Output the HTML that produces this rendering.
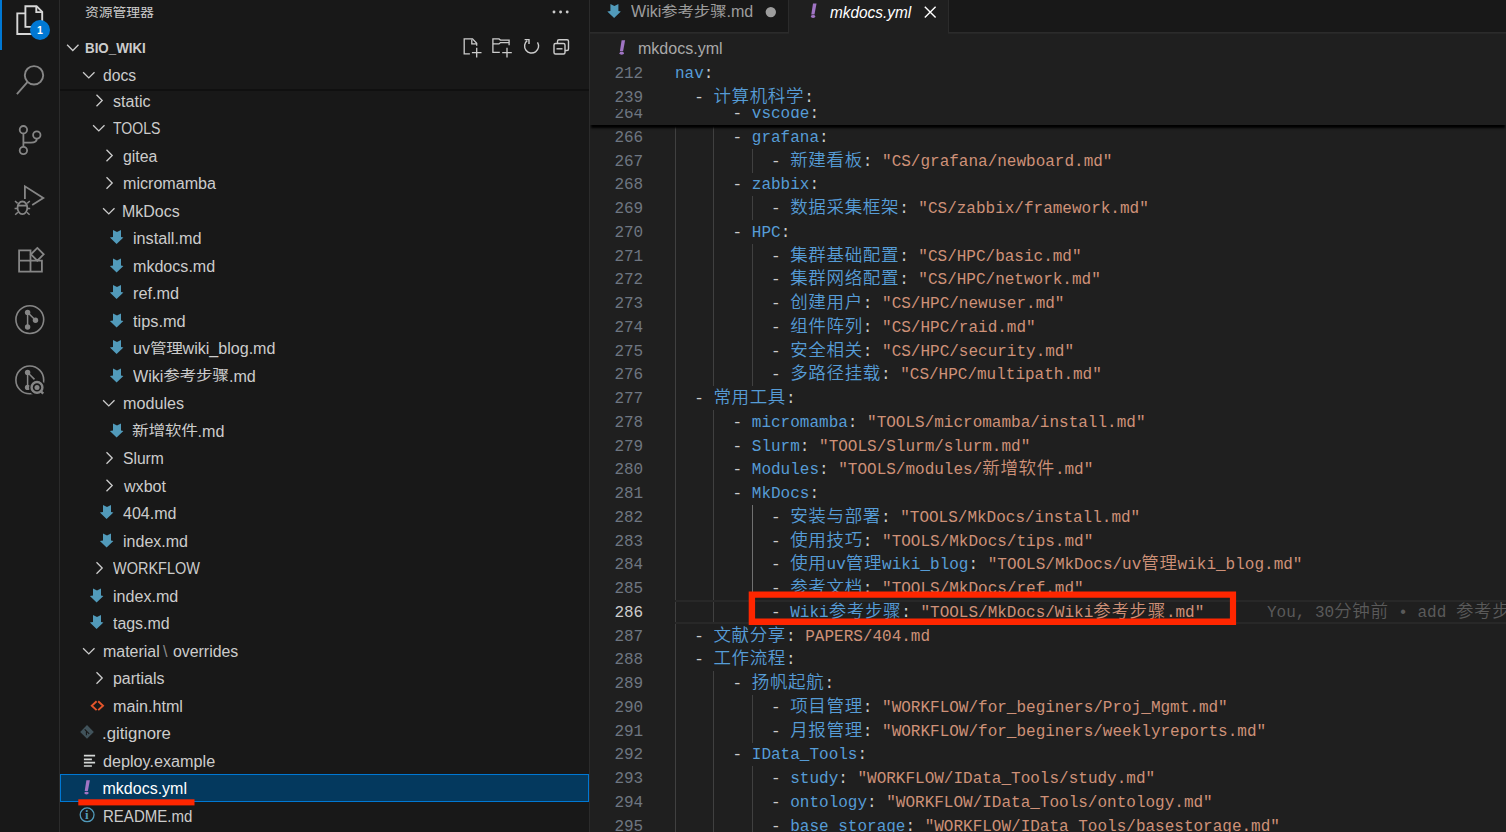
<!DOCTYPE html><html lang="zh-CN"><head><meta charset="utf-8"><title>mkdocs.yml - BIO_WIKI</title><style>
*{box-sizing:border-box}
html,body{margin:0;padding:0;background:#1f1f1f}
body{width:1506px;height:832px;overflow:hidden;position:relative;font-family:"Liberation Sans","Noto Sans CJK SC",sans-serif;color:#ccc;-webkit-font-smoothing:antialiased}
#act{position:absolute;left:0;top:0;width:61px;height:832px;background:#181818}
#actb{position:absolute;left:59px;top:0;width:1px;height:832px;background:#2b2b2b}
#side{position:absolute;left:61px;top:0;width:528px;height:832px;background:#181818}
#sideb{position:absolute;left:589px;top:0;width:1px;height:832px;background:#2b2b2b}
#ed{position:absolute;left:590px;top:0;width:916px;height:832px;background:#1f1f1f;overflow:hidden}
.abs{position:absolute}
.row{position:absolute;left:0;width:528px;height:27.5px;line-height:27.5px;font-size:16px;white-space:pre}
.row .t{position:absolute;top:1.4px;color:#ccc;transform-origin:0 50%;display:block}
.selbg{position:absolute;left:-1px;width:529px;height:27.5px;background:#04395e;outline:1px solid #0078d4;outline-offset:-1px}
.row.sel .t{color:#fff}
.c{font-family:"Liberation Sans","Noto Sans CJK SC",sans-serif;display:inline-block;position:relative;transform-origin:0 50%;line-height:1}
svg{position:absolute;overflow:visible}
.ln{position:absolute;left:0;width:916px;height:23.75px;line-height:23.75px;font-family:"Liberation Mono","Noto Sans CJK SC",monospace;font-size:16px;white-space:pre;color:#ccc}
.ln .n{position:absolute;left:0;top:1.8px;width:53.2px;text-align:right;color:#6e7681}
.ln .x{position:absolute;left:85px;top:1.8px}
.k{color:#569cd6} .s{color:#ce9178}
.z{font-family:"Liberation Mono","Noto Sans CJK SC",monospace;font-size:17.5px;letter-spacing:0.65px;line-height:0;font-weight:350}
.g{position:absolute;width:1px;background:#404040}
</style></head><body>
<div id="act">
<div class="abs" style="left:0;top:0;width:2px;height:50px;background:#0078d4"></div>
<svg width="60" height="832" viewBox="0 0 60 832" style="left:0;top:0" fill="none" stroke-linejoin="miter">
<g stroke="#d7d7d7" stroke-width="1.9"><path d="M25.4 26.9V6.2H36.6L42.2 11.8V26.9H25.4Z"/><path d="M36.3 6.4V12.1H42"/><path d="M25.4 13.4H17.3V34H32.2V27"/></g>
<g stroke="#868686" stroke-width="1.9"><circle cx="34" cy="75.3" r="9.2"/><path d="M27.4 82.2L16.9 94.2"/></g>
<g stroke="#868686" stroke-width="1.8"><circle cx="23.4" cy="129.7" r="3.7"/><circle cx="23.4" cy="150.5" r="3.7"/><circle cx="36.8" cy="135" r="3.7"/><path d="M23.4 133.4V146.8"/><path d="M36.8 138.7C36.8 142.3 34 142.6 31 142.6H23.4"/></g>
<g stroke="#868686" stroke-width="1.8"><path d="M24.9 199V186.3L43.3 197.9L32.2 204.9"/><ellipse cx="22.4" cy="207.8" rx="4.9" ry="6.3"/><path d="M17.6 205.6H27.2"/><path d="M17.6 203.4L15 201M27.2 203.4L29.8 201M17.3 208.5H14.6M27.5 208.5H30.2M17.9 212.2L15.2 214.8M26.9 212.2L29.6 214.8" stroke-width="1.5"/></g>
<g stroke="#868686" stroke-width="1.8"><path d="M19.1 250.3H30.5V260.6H41.9V271.6H19.1Z"/><path d="M19.1 260.6H30.5V271.6"/><path d="M37.3 247.9L43.7 254.3L37.3 260.7L30.9 254.3Z"/></g>
<g stroke="#868686" stroke-width="1.6"><circle cx="29.8" cy="319.6" r="13.9"/><path d="M27.6 312.4V327M27.6 312.4L35.5 320.3" stroke-width="1.5"/></g><g fill="#868686"><circle cx="27.6" cy="312.4" r="2.7"/><circle cx="27.6" cy="327" r="2.7"/><circle cx="35.5" cy="320.3" r="2.7"/></g>
<g stroke="#868686" stroke-width="1.6"><circle cx="29.8" cy="379.9" r="13.9"/><path d="M27.6 372.5V387.4M27.6 372.5L34.5 379.4" stroke-width="1.5"/></g><g fill="#868686"><circle cx="27.6" cy="372.5" r="2.7"/><circle cx="27.6" cy="387.4" r="2.7"/></g><circle cx="37.2" cy="387.6" r="8.2" fill="#181818"/><g stroke="#868686"><circle cx="37" cy="387.4" r="5.4" stroke-width="2.4"/><path d="M41 391.4L43.2 393.6" stroke-width="2.4"/></g><circle cx="37" cy="387.4" r="2.5" fill="#868686"/>
</svg>
<div class="abs" style="left:29.9px;top:19.8px;width:20px;height:20px;border-radius:10px;background:#0078d4;color:#fff;font-weight:bold;font-size:10.5px;line-height:20px;text-align:center">1</div>
</div><div id="actb"></div>
<div id="side">
<div class="abs" style="left:24px;top:1.2px;font-size:13.75px;line-height:24px;color:#ccc;white-space:pre"><span class="c" style="font-size:12.4px;letter-spacing:-0.12px;margin-right:7.37px;transform:scaleX(1.12);top:0px">资源管理器</span></div>
<svg width="20" height="6" viewBox="0 0 20 6" style="left:490px;top:9px" fill="#ccc"><circle cx="3" cy="3" r="1.45"/><circle cx="9.6" cy="3" r="1.45"/><circle cx="16.2" cy="3" r="1.45"/></svg>
<div class="row" style="top:33.5px"><svg width="528" height="28" style="left:0;top:0"><path d="M6.1 10.8L11.8 16.5L17.5 10.8" stroke="#ccc" stroke-width="1.3" fill="none"/></svg><span class="t" style="left:24.14px;transform:scaleX(0.9710);font-weight:bold;font-size:13.75px;top:1px">BIO_WIKI</span></div>
<svg width="528" height="70" viewBox="61 0 528 70" style="left:0;top:0" fill="none" stroke="#ccc" stroke-width="1.4"><g stroke-width="1.3"><path d="M469.9 53.9H464.2V38.9H472.5L476.7 43.2V45.8"/><path d="M471.8 39.4V43.9H476.2"/><path d="M476.7 47.8V57.4M471.9 52.6H481.5"/><path d="M499.8 52.3H492.9V38.9H499L500.4 40.1H509.1V45.2"/><path d="M492.9 43.9H499L500.4 42.6H509.1"/><path d="M507 47.8V57.4M502.2 52.6H511.8"/></g><path d="M537.5 42.3A7 7 0 1 1 527.2 40.6"/><path d="M524.6 39.6H529V44"/><rect x="554" y="43.5" width="11" height="10.5" rx="1.5"/><path d="M557.5 43.5V41.3Q557.5 39.8 559 39.8H567Q568.5 39.8 568.5 41.3V49Q568.5 50.5 567 50.5H565"/><path d="M556.5 48.8H562.5"/></svg>
<div class="selbg" style="top:774.00px"></div>
<div class="row" style="top:86.50px"><svg width="528" height="28" style="left:0;top:0"><path d="M35.5 7.8L41.2 13.5L35.5 19.2" stroke="#ccc" stroke-width="1.3" fill="none"/></svg><span class="t" style="left:51.92px;transform:scaleX(1.0051);">static</span></div>
<div class="row" style="top:114.00px"><svg width="528" height="28" style="left:0;top:0"><path d="M32.1 11.2L37.8 16.9L43.5 11.2" stroke="#ccc" stroke-width="1.3" fill="none"/></svg><span class="t" style="left:52.20px;transform:scaleX(0.8801);">TOOLS</span></div>
<div class="row" style="top:141.50px"><svg width="528" height="28" style="left:0;top:0"><path d="M45.5 7.8L51.2 13.5L45.5 19.2" stroke="#ccc" stroke-width="1.3" fill="none"/></svg><span class="t" style="left:61.64px;transform:scaleX(0.9896);">gitea</span></div>
<div class="row" style="top:169.00px"><svg width="528" height="28" style="left:0;top:0"><path d="M45.5 8.3L51.2 14.0L45.5 19.7" stroke="#ccc" stroke-width="1.3" fill="none"/></svg><span class="t" style="left:62.06px;transform:scaleX(1.0059);">micromamba</span></div>
<div class="row" style="top:196.50px"><svg width="528" height="28" style="left:0;top:0"><path d="M42.1 11.2L47.8 16.9L53.5 11.2" stroke="#ccc" stroke-width="1.3" fill="none"/></svg><span class="t" style="left:61.22px;transform:scaleX(0.9970);">MkDocs</span></div>
<div class="row" style="top:224.00px"><svg width="528" height="28" style="left:0;top:0"><polygon points="52.0,6.0 56.0,8.0 60.0,6.0 60.0,13.1 62.4,13.5 55.6,19.9 48.9,13.5 52.0,13.1" fill="#519aba"/></svg><span class="t" style="left:71.50px;transform:scaleX(1.0134);">install.md</span></div>
<div class="row" style="top:251.50px"><svg width="528" height="28" style="left:0;top:0"><polygon points="52.0,6.5 56.0,8.5 60.0,6.5 60.0,13.6 62.4,14.0 55.6,20.4 48.9,14.0 52.0,13.6" fill="#519aba"/></svg><span class="t" style="left:71.50px;transform:scaleX(1.0046);">mkdocs.md</span></div>
<div class="row" style="top:279.00px"><svg width="528" height="28" style="left:0;top:0"><polygon points="52.0,6.0 56.0,8.0 60.0,6.0 60.0,13.1 62.4,13.5 55.6,19.9 48.9,13.5 52.0,13.1" fill="#519aba"/></svg><span class="t" style="left:71.50px;transform:scaleX(1.0161);">ref.md</span></div>
<div class="row" style="top:306.50px"><svg width="528" height="28" style="left:0;top:0"><polygon points="52.0,6.5 56.0,8.5 60.0,6.5 60.0,13.6 62.4,14.0 55.6,20.4 48.9,14.0 52.0,13.6" fill="#519aba"/></svg><span class="t" style="left:72.20px;transform:scaleX(1.0209);">tips.md</span></div>
<div class="row" style="top:334.00px"><svg width="528" height="28" style="left:0;top:0"><polygon points="52.0,6.0 56.0,8.0 60.0,6.0 60.0,13.1 62.4,13.5 55.6,19.9 48.9,13.5 52.0,13.1" fill="#519aba"/></svg><span class="t" style="left:71.50px;transform:scaleX(1.0039);">uv<span class="c" style="font-size:13.8px;letter-spacing:-0.26px;margin-right:5.42px;transform:scaleX(1.2);top:-1.5px">管理</span>wiki_blog.md</span></div>
<div class="row" style="top:361.50px"><svg width="528" height="28" style="left:0;top:0"><polygon points="52.0,6.5 56.0,8.5 60.0,6.5 60.0,13.6 62.4,14.0 55.6,20.4 48.9,14.0 52.0,13.6" fill="#519aba"/></svg><span class="t" style="left:72.20px;transform:scaleX(1.0075);">Wiki<span class="c" style="font-size:13.8px;letter-spacing:-0.26px;margin-right:10.83px;transform:scaleX(1.2);top:-1.5px">参考步骤</span>.md</span></div>
<div class="row" style="top:389.00px"><svg width="528" height="28" style="left:0;top:0"><path d="M42.1 11.2L47.8 16.9L53.5 11.2" stroke="#ccc" stroke-width="1.3" fill="none"/></svg><span class="t" style="left:62.06px;transform:scaleX(1.0090);">modules</span></div>
<div class="row" style="top:416.50px"><svg width="528" height="28" style="left:0;top:0"><polygon points="52.0,6.5 56.0,8.5 60.0,6.5 60.0,13.6 62.4,14.0 55.6,20.4 48.9,14.0 52.0,13.6" fill="#519aba"/></svg><span class="t" style="left:70.80px;transform:scaleX(1.0081);"><span class="c" style="font-size:13.8px;letter-spacing:-0.26px;margin-right:10.83px;transform:scaleX(1.2);top:-1.5px">新增软件</span>.md</span></div>
<div class="row" style="top:444.00px"><svg width="528" height="28" style="left:0;top:0"><path d="M45.5 8.3L51.2 14.0L45.5 19.7" stroke="#ccc" stroke-width="1.3" fill="none"/></svg><span class="t" style="left:61.64px;transform:scaleX(0.9782);">Slurm</span></div>
<div class="row" style="top:471.50px"><svg width="528" height="28" style="left:0;top:0"><path d="M45.5 7.8L51.2 13.5L45.5 19.2" stroke="#ccc" stroke-width="1.3" fill="none"/></svg><span class="t" style="left:63.04px;transform:scaleX(1.0044);">wxbot</span></div>
<div class="row" style="top:499.00px"><svg width="528" height="28" style="left:0;top:0"><polygon points="42.0,6.0 46.0,8.0 50.0,6.0 50.0,13.1 52.4,13.5 45.6,19.9 38.9,13.5 42.0,13.1" fill="#519aba"/></svg><span class="t" style="left:61.64px;transform:scaleX(1.0005);">404.md</span></div>
<div class="row" style="top:526.50px"><svg width="528" height="28" style="left:0;top:0"><polygon points="42.0,6.5 46.0,8.5 50.0,6.5 50.0,13.6 52.4,14.0 45.6,20.4 38.9,14.0 42.0,13.6" fill="#519aba"/></svg><span class="t" style="left:62.06px;transform:scaleX(1.0000);">index.md</span></div>
<div class="row" style="top:554.00px"><svg width="528" height="28" style="left:0;top:0"><path d="M35.5 8.3L41.2 14.0L35.5 19.7" stroke="#ccc" stroke-width="1.3" fill="none"/></svg><span class="t" style="left:51.92px;transform:scaleX(0.9053);">WORKFLOW</span></div>
<div class="row" style="top:581.50px"><svg width="528" height="28" style="left:0;top:0"><polygon points="32.0,6.5 36.0,8.5 40.0,6.5 40.0,13.6 42.4,14.0 35.6,20.4 28.9,14.0 32.0,13.6" fill="#519aba"/></svg><span class="t" style="left:51.78px;transform:scaleX(1.0056);">index.md</span></div>
<div class="row" style="top:609.00px"><svg width="528" height="28" style="left:0;top:0"><polygon points="32.0,6.0 36.0,8.0 40.0,6.0 40.0,13.1 42.4,13.5 35.6,19.9 28.9,13.5 32.0,13.1" fill="#519aba"/></svg><span class="t" style="left:51.92px;transform:scaleX(0.9938);">tags.md</span></div>
<div class="row" style="top:636.50px"><svg width="528" height="28" style="left:0;top:0"><path d="M22.1 11.2L27.8 16.9L33.5 11.2" stroke="#ccc" stroke-width="1.3" fill="none"/></svg><span class="t" style="left:41.92px;transform:scaleX(0.9969);">material</span><span class="t" style="left:102.00px;transform:scaleX(1.0000);color:#8c8c8c">\</span><span class="t" style="left:111.56px;transform:scaleX(0.9919);">overrides</span></div>
<div class="row" style="top:664.00px"><svg width="528" height="28" style="left:0;top:0"><path d="M35.5 8.3L41.2 14.0L35.5 19.7" stroke="#ccc" stroke-width="1.3" fill="none"/></svg><span class="t" style="left:51.50px;transform:scaleX(0.9966);">partials</span></div>
<div class="row" style="top:691.50px"><svg width="528" height="28" style="left:0;top:0"><path d="M35.6 9.3L30.8 13.7L35.6 18.1M37.2 9.3L42.0 13.7L37.2 18.1" stroke="#e4552b" stroke-width="1.9" fill="none"/></svg><span class="t" style="left:51.50px;transform:scaleX(1.0082);">main.html</span></div>
<div class="row" style="top:719.00px"><svg width="528" height="28" style="left:0;top:0"><path d="M26.0 6.1L32.8 12.9L26.0 19.7L19.2 12.9Z" fill="#41535b"/><path d="M23.7 10.3L28.2 14.8M25.4 12.1V16.2" stroke="#181818" stroke-width="1.1" fill="none"/></svg><span class="t" style="left:41.22px;transform:scaleX(1.0473);">.gitignore</span></div>
<div class="row" style="top:746.50px"><svg width="528" height="28" style="left:0;top:0"><path d="M22.9 8.7H34.1M22.9 12.3H30.9M22.9 15.6H34.1M22.9 19H30.9" stroke="#d4d7d6" stroke-width="1.7" fill="none"/></svg><span class="t" style="left:41.92px;transform:scaleX(1.0115);">deploy.example</span></div>
<div class="row sel" style="top:774.00px"><svg width="528" height="28" style="left:0;top:0"><polygon points="25.4,6.2 28.9,6.2 26.9,17.1 23.7,17.1" fill="#a074c4"/><ellipse cx="25.5" cy="19.1" rx="2.2" ry="1.45" fill="#a074c4"/></svg><span class="t" style="left:41.50px;transform:scaleX(1.0000);">mkdocs.yml</span></div>
<div class="row" style="top:801.50px"><svg width="528" height="28" style="left:0;top:0"><circle cx="26.1" cy="12.8" r="6.9" stroke="#519aba" stroke-width="1.3" fill="none"/></svg><span class="t" style="left:23.9px;color:#519aba;font-weight:bold;font-family:'Liberation Serif',serif;font-size:13px;top:-0.3px">i</span><span class="t" style="left:41.78px;transform:scaleX(0.9386);">README.md</span></div>
<div class="abs" style="left:0;top:61px;width:528px;height:27.5px;background:#181818"></div><div class="abs" style="left:-1px;top:89px;width:529px;height:2px;background:#101010"></div>
<div class="row" style="top:60.60px"><svg width="528" height="28" style="left:0;top:0"><path d="M22.1 11.2L27.8 16.9L33.5 11.2" stroke="#ccc" stroke-width="1.3" fill="none"/></svg><span class="t" style="left:41.50px;transform:scaleX(0.9791);">docs</span></div>
<svg width="528" height="832" viewBox="61 0 528 832" style="left:0;top:0"><rect x="78.3" y="799.3" width="116.2" height="6.1" fill="#ff2600"/></svg>
</div><div id="sideb"></div>
<div id="ed">
<div class="abs" style="left:0;top:0;width:916px;height:32px;background:#181818"></div>
<div class="abs" style="left:0;top:32px;width:916px;height:1px;background:#2b2b2b"></div><div class="abs" style="left:0;top:33px;width:916px;height:1px;background:#262626"></div>
<div class="abs" style="left:198px;top:0;width:1px;height:32px;background:#2b2b2b"></div>
<div class="abs" style="left:199px;top:0;width:159px;height:34px;background:#1f1f1f"></div>
<div class="abs" style="left:358px;top:0;width:1px;height:32px;background:#2b2b2b"></div>
<svg width="400" height="60" style="left:0;top:0"><polygon points="20.4,4.0 24.4,6.0 28.4,4.0 28.4,11.1 30.8,11.5 24.1,17.9 17.3,11.5 20.4,11.1" fill="#519aba"/><circle cx="180.8" cy="12.1" r="5.2" fill="#9d9d9d"/><polygon points="223.0,3.6 226.5,3.6 224.5,14.5 221.3,14.5" fill="#a074c4"/><ellipse cx="223.1" cy="16.5" rx="2.2" ry="1.45" fill="#a074c4"/><polygon points="31.6,40.3 35.1,40.3 33.1,51.2 29.9,51.2" fill="#a074c4"/><ellipse cx="31.7" cy="53.2" rx="2.2" ry="1.45" fill="#a074c4"/><path d="M334.8 6.8L345.6 17.6M345.6 6.8L334.8 17.6" stroke="#fff" stroke-width="1.4" fill="none"/></svg>
<div class="abs" style="left:40.70px;top:0px;font-size:16px;line-height:24.6px;white-space:pre;transform-origin:0 50%;transform:scaleX(1.0032);color:#9d9d9d">Wiki<span class="c" style="font-size:13.8px;letter-spacing:-0.26px;margin-right:10.83px;transform:scaleX(1.2);top:-1.5px">参考步骤</span>.md</div>
<div class="abs" style="left:239.72px;top:1px;font-size:16px;line-height:24.6px;white-space:pre;transform-origin:0 50%;transform:scaleX(0.9603);color:#fff;font-style:italic">mkdocs.yml</div>
<div class="abs" style="left:47.84px;top:34.8px;font-size:16px;line-height:27.5px;white-space:pre;transform-origin:0 50%;transform:scaleX(1.0021);color:#a9a9a9">mkdocs.yml</div>
<div class="g" style="left:85px;top:125.00px;height:712.50px"></div>
<div class="g" style="left:123.4px;top:125.00px;height:261.25px"></div>
<div class="g" style="left:123.4px;top:410.00px;height:213.75px"></div>
<div class="g" style="left:123.4px;top:671.25px;height:166.25px"></div>
<div class="g" style="left:161.8px;top:148.75px;height:23.75px"></div>
<div class="g" style="left:161.8px;top:196.25px;height:23.75px"></div>
<div class="g" style="left:161.8px;top:243.75px;height:142.50px"></div>
<div class="g" style="left:161.8px;top:505.00px;height:118.75px;background:#707070"></div>
<div class="g" style="left:161.8px;top:695.00px;height:47.50px"></div>
<div class="g" style="left:161.8px;top:766.25px;height:71.25px"></div>
<div class="abs" style="left:85px;top:600px;width:831px;height:23.75px;border-top:2px solid #282828;border-bottom:2px solid #282828"></div>
<div class="ln" style="top:125.00px"><span class="n">266</span><span class="x">      - <span class="k">grafana</span>:</span></div>
<div class="ln" style="top:148.75px"><span class="n">267</span><span class="x">          - <span class="k"><span class="z">新建看板</span></span>: <span class="s">"CS/grafana/newboard.md"</span></span></div>
<div class="ln" style="top:172.50px"><span class="n">268</span><span class="x">      - <span class="k">zabbix</span>:</span></div>
<div class="ln" style="top:196.25px"><span class="n">269</span><span class="x">          - <span class="k"><span class="z">数据采集框架</span></span>: <span class="s">"CS/zabbix/framework.md"</span></span></div>
<div class="ln" style="top:220.00px"><span class="n">270</span><span class="x">      - <span class="k">HPC</span>:</span></div>
<div class="ln" style="top:243.75px"><span class="n">271</span><span class="x">          - <span class="k"><span class="z">集群基础配置</span></span>: <span class="s">"CS/HPC/basic.md"</span></span></div>
<div class="ln" style="top:267.50px"><span class="n">272</span><span class="x">          - <span class="k"><span class="z">集群网络配置</span></span>: <span class="s">"CS/HPC/network.md"</span></span></div>
<div class="ln" style="top:291.25px"><span class="n">273</span><span class="x">          - <span class="k"><span class="z">创建用户</span></span>: <span class="s">"CS/HPC/newuser.md"</span></span></div>
<div class="ln" style="top:315.00px"><span class="n">274</span><span class="x">          - <span class="k"><span class="z">组件阵列</span></span>: <span class="s">"CS/HPC/raid.md"</span></span></div>
<div class="ln" style="top:338.75px"><span class="n">275</span><span class="x">          - <span class="k"><span class="z">安全相关</span></span>: <span class="s">"CS/HPC/security.md"</span></span></div>
<div class="ln" style="top:362.50px"><span class="n">276</span><span class="x">          - <span class="k"><span class="z">多路径挂载</span></span>: <span class="s">"CS/HPC/multipath.md"</span></span></div>
<div class="ln" style="top:386.25px"><span class="n">277</span><span class="x">  - <span class="k"><span class="z">常用工具</span></span>:</span></div>
<div class="ln" style="top:410.00px"><span class="n">278</span><span class="x">      - <span class="k">micromamba</span>: <span class="s">"TOOLS/micromamba/install.md"</span></span></div>
<div class="ln" style="top:433.75px"><span class="n">279</span><span class="x">      - <span class="k">Slurm</span>: <span class="s">"TOOLS/Slurm/slurm.md"</span></span></div>
<div class="ln" style="top:457.50px"><span class="n">280</span><span class="x">      - <span class="k">Modules</span>: <span class="s">"TOOLS/modules/<span class="z">新增软件</span>.md"</span></span></div>
<div class="ln" style="top:481.25px"><span class="n">281</span><span class="x">      - <span class="k">MkDocs</span>:</span></div>
<div class="ln" style="top:505.00px"><span class="n">282</span><span class="x">          - <span class="k"><span class="z">安装与部署</span></span>: <span class="s">"TOOLS/MkDocs/install.md"</span></span></div>
<div class="ln" style="top:528.75px"><span class="n">283</span><span class="x">          - <span class="k"><span class="z">使用技巧</span></span>: <span class="s">"TOOLS/MkDocs/tips.md"</span></span></div>
<div class="ln" style="top:552.50px"><span class="n">284</span><span class="x">          - <span class="k"><span class="z">使用</span>uv<span class="z">管理</span>wiki_blog</span>: <span class="s">"TOOLS/MkDocs/uv<span class="z">管理</span>wiki_blog.md"</span></span></div>
<div class="ln" style="top:576.25px"><span class="n">285</span><span class="x">          - <span class="k"><span class="z">参考文档</span></span>: <span class="s">"TOOLS/MkDocs/ref.md"</span></span></div>
<div class="ln" style="top:600.00px"><span class="n" style="color:#ccc">286</span><span class="x">          - <span class="k">Wiki<span class="z">参考步骤</span></span>: <span class="s">"TOOLS/MkDocs/Wiki<span class="z">参考步骤</span>.md"</span></span></div>
<div class="ln" style="top:623.75px"><span class="n">287</span><span class="x">  - <span class="k"><span class="z">文献分享</span></span>: <span class="s">PAPERS/404.md</span></span></div>
<div class="ln" style="top:647.50px"><span class="n">288</span><span class="x">  - <span class="k"><span class="z">工作流程</span></span>:</span></div>
<div class="ln" style="top:671.25px"><span class="n">289</span><span class="x">      - <span class="k"><span class="z">扬帆起航</span></span>:</span></div>
<div class="ln" style="top:695.00px"><span class="n">290</span><span class="x">          - <span class="k"><span class="z">项目管理</span></span>: <span class="s">"WORKFLOW/for_beginers/Proj_Mgmt.md"</span></span></div>
<div class="ln" style="top:718.75px"><span class="n">291</span><span class="x">          - <span class="k"><span class="z">月报管理</span></span>: <span class="s">"WORKFLOW/for_beginers/weeklyreports.md"</span></span></div>
<div class="ln" style="top:742.50px"><span class="n">292</span><span class="x">      - <span class="k">IData_Tools</span>:</span></div>
<div class="ln" style="top:766.25px"><span class="n">293</span><span class="x">          - <span class="k">study</span>: <span class="s">"WORKFLOW/IData_Tools/study.md"</span></span></div>
<div class="ln" style="top:790.00px"><span class="n">294</span><span class="x">          - <span class="k">ontology</span>: <span class="s">"WORKFLOW/IData_Tools/ontology.md"</span></span></div>
<div class="ln" style="top:813.75px"><span class="n">295</span><span class="x">          - <span class="k">base_storage</span>: <span class="s">"WORKFLOW/IData_Tools/basestorage.md"</span></span></div>
<div class="ln" style="top:600.00px"><span class="x" style="left:677px;color:#5a5a5a">You, 30<span class="z">分钟前</span> • add <span class="z">参考步骤</span></span></div>
<div class="abs" style="left:0;top:60.5px;width:916px;height:64.5px;background:#1f1f1f;box-shadow:0 3.5px 2px -1px #000;overflow:hidden">
<div class="ln" style="top:40.5px"><span class="n">264</span><span class="x">      - <span class="k">vscode</span>:</span></div>
<div class="abs" style="left:0;top:0;width:916px;height:48.3px;background:#1f1f1f"></div>
<div class="ln" style="top:1px"><span class="n">212</span><span class="x"><span class="k">nav</span>:</span></div>
<div class="ln" style="top:24.8px"><span class="n">239</span><span class="x">  - <span class="k"><span class="z">计算机科学</span></span>:</span></div>
</div>
<svg width="916" height="832" viewBox="590 0 916 832" style="left:0;top:0"><path fill="#ff2600" fill-rule="evenodd" d="M748.7 591.4H1236.1V625.1H748.7ZM755.1 597.85H1229.9V618.6H755.1Z"/></svg>
</div>
</body></html>
